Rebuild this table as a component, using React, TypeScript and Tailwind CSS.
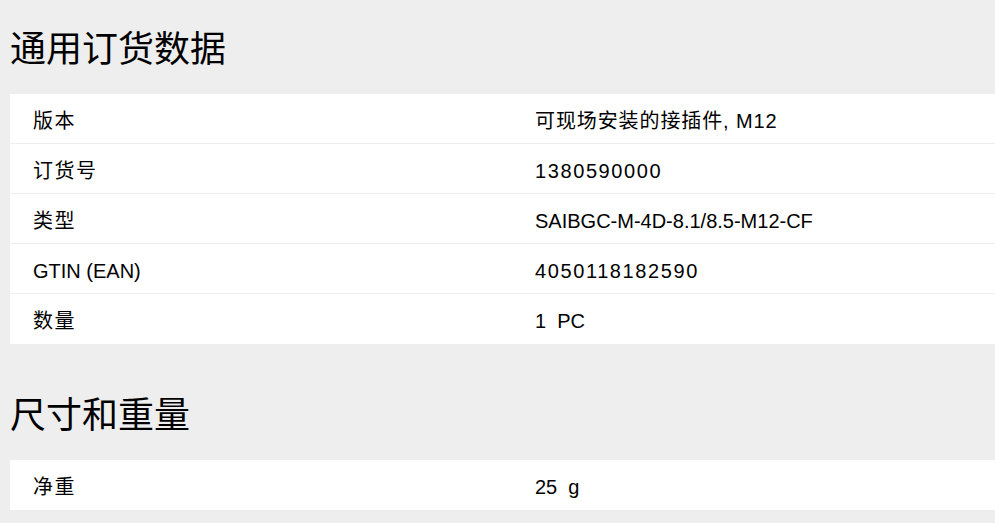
const ordering = [
  { label: '版本', value: '可现场安装的接插件, M12', labelCls: 'tracking-[1.5px]', valueCls: 'tracking-[0.9px]' },
  { label: '订货号', value: '1380590000', labelCls: 'tracking-[1.5px]', valueCls: 'tracking-[1.6px]' },
  { label: '类型', value: 'SAIBGC-M-4D-8.1/8.5-M12-CF', labelCls: 'tracking-[1.5px]', valueCls: '' },
  { label: 'GTIN (EAN)', value: '4050118182590', labelCls: '', valueCls: 'tracking-[1.6px]' },
  { label: '数量', value: '1  PC', labelCls: 'tracking-[1.5px]', valueCls: '' },
];

const dims = [
  { label: '净重', value: '25  g', labelCls: 'tracking-[1.5px]', valueCls: '' },
];

type Row = { label: string; value: string; labelCls: string; valueCls: string };

function Section({ title, rows, first }: { title: string; rows: Row[]; first?: boolean }) {
  return (
    <section className={first ? 'pt-[28px]' : 'pt-[50px]'}>
      <h2 className="pl-[10px] text-[36px] leading-[44px] text-black mb-[22px]">{title}</h2>
      <div className="ml-[10px] bg-white">
        {rows.map((r, i) => (
          <div
            key={r.label}
            className={`grid grid-cols-[525px_1fr] items-center h-[50px] pt-[4px] ${i < rows.length - 1 ? 'border-b border-[#eeeeee]' : ''}`}
          >
            <div className={`pl-[23px] text-[20px] text-black ${r.labelCls}`}>{r.label}</div>
            <div className={`text-[20px] text-black whitespace-pre ${r.valueCls}`}>{r.value}</div>
          </div>
        ))}
      </div>
    </section>
  );
}

export default function App() {
  return (
    <div
      className="min-h-[523px] w-full bg-[#eeeeee] pb-[13px]"
      style={{ fontFamily: '"Liberation Sans", "Noto Sans CJK SC", sans-serif' }}
    >
      <Section title="通用订货数据" rows={ordering} first />
      <Section title="尺寸和重量" rows={dims} />
    </div>
  );
}
